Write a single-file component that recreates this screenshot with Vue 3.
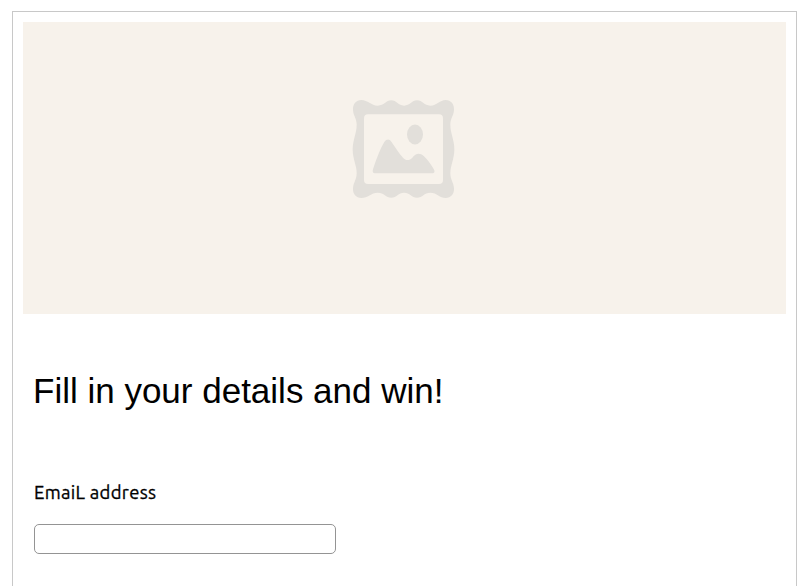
<script setup>
import { ref } from 'vue'

const email = ref('')
</script>

<template>
  <main class="frame">
    <div class="banner">
      <svg class="picture" viewBox="-3 0 393 360" aria-hidden="true">
        <path
          fill="#e2dfda"
          d="M64 30C83 30 94 47 113 47C133 47 137 31 154 31C170 31 175 47 192 47C210 47 215 31 231 31C248 31 252 47 271 47C291 47 299 30 317 30C333 30 343 43 342 60C341 78 331 84 331 104C331 130 343 149 343 178C343 207 331 226 331 250C331 270 341 277 342 295C343 312 333 324 317 324C299 324 291 308 271 308C252 308 248 323 231 323C215 323 210 308 192 308C175 308 170 323 154 323C137 323 133 308 113 308C94 308 83 324 64 324C48 324 38 312 39 295C40 277 50 270 50 250C50 226 38 207 38 178C38 149 50 130 50 104C50 84 40 78 39 60C38 43 48 30 64 30Z"
        />
        <rect x="72" y="73" width="237" height="209" rx="12" fill="#f7f2eb" />
        <ellipse cx="225" cy="133.500" rx="24" ry="30" fill="#e2dfda" />
        <path
          fill="#e2dfda"
          d="M105 250C98 250 97 244 99 238C109 207 122 174 133 156C139 147 148 146 154 155C166 171 177 190 189 203C197 212 208 213 217 203C227 190 239 187 251 198C262 208 273 223 281 237C286 245 283 250 276 250Z"
        />
      </svg>
    </div>
    <h1 class="title">Fill in your details and win!</h1>
    <form class="form" @submit.prevent>
      <label class="label" for="email">EmaiL address</label>
      <input id="email" v-model="email" class="field" type="email" />
    </form>
  </main>
</template>

<style>
body {
  background: #fff;
}
</style>

<style scoped>
.frame {
  box-sizing: border-box;
  width: 785px;
  height: 575px;
  margin: 11px 0 0 12px;
  padding: 10px;
  border: 1px solid #c8c8c8;
  border-bottom: 0;
  color: #000;
}
.banner {
  display: flex;
  justify-content: center;
  box-sizing: border-box;
  height: 292px;
  padding-top: 68px;
  background: #f7f2eb;
}
.picture {
  width: 131px;
  height: 120px;
}
.title {
  margin: 56px 0 0 10px;
  font: 400 35px/42px "Liberation Sans", Arial, sans-serif;
  white-space: nowrap;
}
.form {
  display: flex;
  flex-direction: column;
  align-items: flex-start;
  margin: 68px 0 0 11px;
}
.label {
  font: 400 18.5px/24px Ubuntu, "Noto Sans", sans-serif;
  letter-spacing: 0.3px;
  -webkit-text-stroke: 0.3px #000;
}
.field {
  box-sizing: border-box;
  width: 302px;
  height: 30px;
  margin: 20px 0 0;
  padding: 4px 8px;
  border: 1px solid #949494;
  border-radius: 5px;
  background: #fff;
  font: 16px "Noto Sans", sans-serif;
  outline: none;
}
</style>
